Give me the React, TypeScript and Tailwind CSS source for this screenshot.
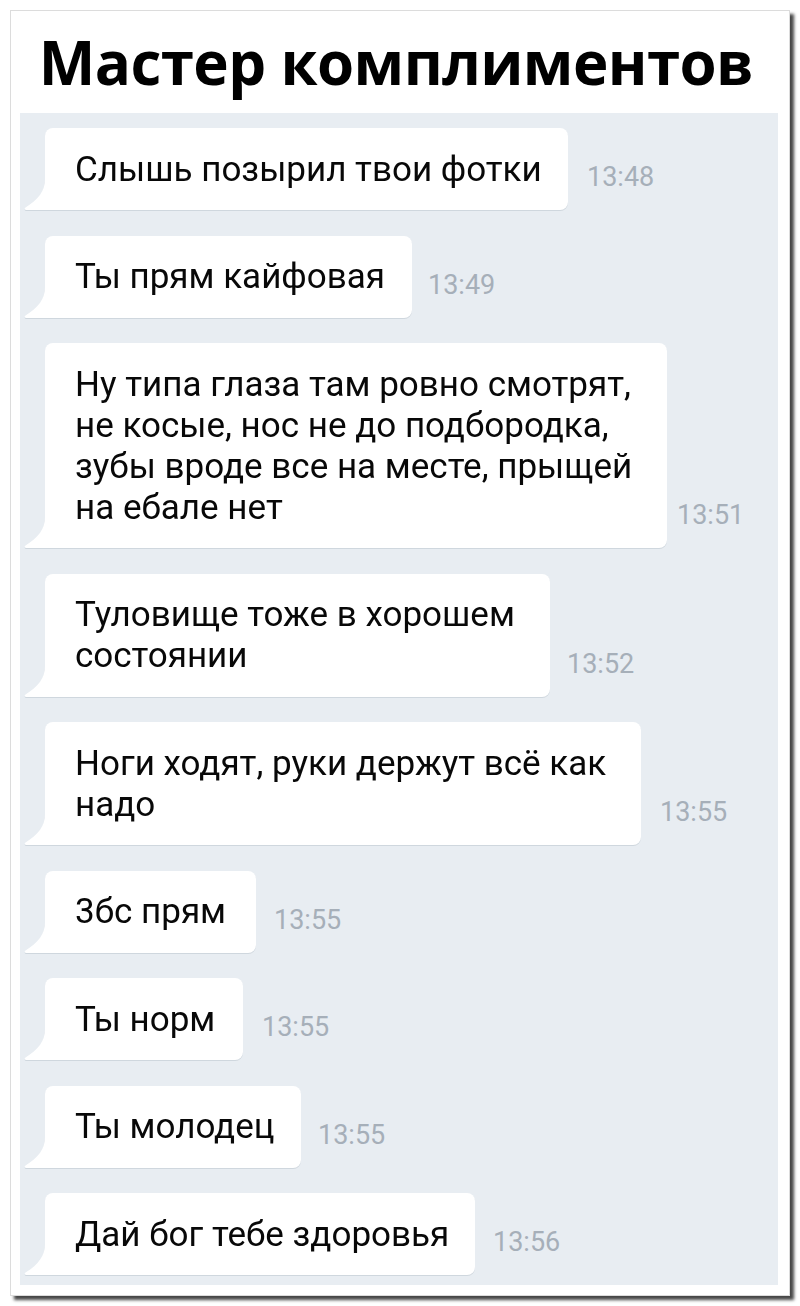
import React from "react";

type Message = {
  lines: string[];
  time: string;
  width: number;
  gap: number;
};

const messages: Message[] = [
  { lines: ["Слышь позырил твои фотки"], time: "13:48", width: 523, gap: 19 },
  { lines: ["Ты прям кайфовая"], time: "13:49", width: 367, gap: 16 },
  {
    lines: [
      "Ну типа глаза там ровно смотрят,",
      "не косые, нос не до подбородка,",
      "зубы вроде все на месте, прыщей",
      "на ебале нет",
    ],
    time: "13:51",
    width: 622,
    gap: 10,
  },
  { lines: ["Туловище тоже в хорошем", "состоянии"], time: "13:52", width: 505, gap: 17 },
  { lines: ["Ноги ходят, руки держут всё как", "надо"], time: "13:55", width: 596, gap: 19 },
  { lines: ["3бс прям"], time: "13:55", width: 211, gap: 18 },
  { lines: ["Ты норм"], time: "13:55", width: 198, gap: 19 },
  { lines: ["Ты молодец"], time: "13:55", width: 256, gap: 17 },
  { lines: ["Дай бог тебе здоровья"], time: "13:56", width: 430, gap: 18 },
];

function Tail() {
  return (
    <svg
      className="absolute bottom-0 left-[-22px]"
      width="23"
      height="31"
      viewBox="0 0 23 31"
      aria-hidden="true"
    >
      <path d="M23 0 L22 0 C22 12 15 21 2.5 28.5 Q0.5 30 3 31 L23 31 Z" fill="#ffffff" />
    </svg>
  );
}

function Bubble({ m }: { m: Message }) {
  return (
    <div className="flex items-end pl-[25px]">
      <div
        className="relative shrink-0 rounded-t-[8px] rounded-br-[8px] bg-white py-[20.5px] pl-[30px] drop-shadow-[0_1px_0_rgba(120,135,150,0.22)]"
        style={{ width: m.width }}
      >
        <Tail />
        {m.lines.map((l, i) => (
          <div
            key={i}
            className="whitespace-nowrap text-[35px] leading-[41px] text-[#080808] [font-family:Roboto,'Noto_Sans',sans-serif]"
          >
            {l}
          </div>
        ))}
      </div>
      <div
        className="mb-[19px] text-[27px] leading-none text-[#a6afb9] [font-family:Roboto,'Noto_Sans',sans-serif]"
        style={{ marginLeft: m.gap }}
      >
        {m.time}
      </div>
    </div>
  );
}

export default function App() {
  return (
    <div className="h-[1306px] w-[800px] bg-white pl-[10px] pt-[10px]">
      <div className="flex h-[1286px] w-[780px] flex-col border border-[#dcdcdc] bg-white shadow-[4px_4px_3px_rgba(0,0,0,0.72)]">
        <div className="flex h-[102px] shrink-0 justify-center pr-[8px] pt-[21px]">
          <h1 className="text-[60px] font-bold leading-none tracking-[-0.6px] text-black [font-family:'Open_Sans',sans-serif]">
            Мастер комплиментов
          </h1>
        </div>
        <div className="ml-[9px] flex h-[1172px] w-[758px] flex-col gap-[25.5px] bg-[#e8edf2] pt-[15px]">
          {messages.map((m, i) => (
            <Bubble key={i} m={m} />
          ))}
        </div>
      </div>
    </div>
  );
}
